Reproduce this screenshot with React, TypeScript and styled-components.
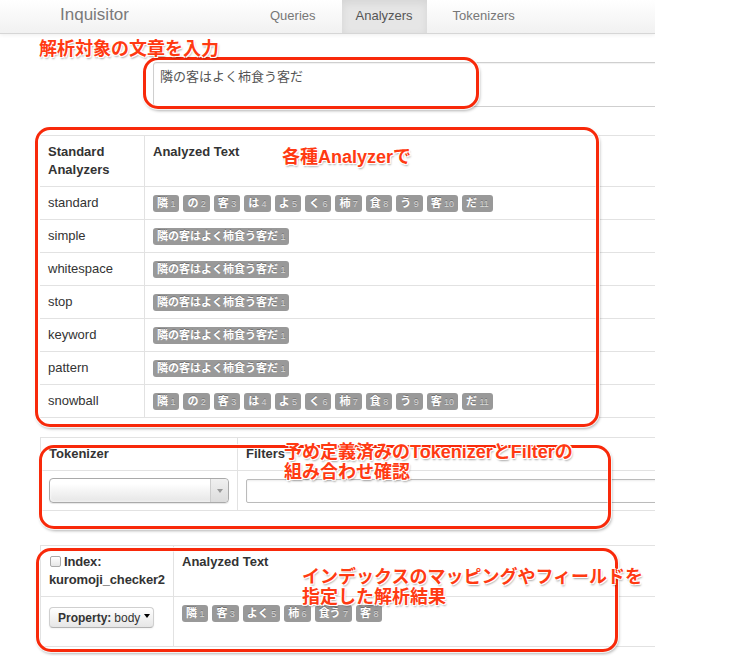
import React from "react";
import styled, { createGlobalStyle } from "styled-components";

const Global = createGlobalStyle`
  html, body { margin: 0; padding: 0; background: #fff; }
  body { font-family: "Liberation Sans", Arial, "Noto Sans CJK JP", sans-serif; color: #333; }
`;

const Viewport = styled.div`
  width: 736px;
  height: 656px;
  position: relative;
  overflow: hidden;
  background: #fff;
`;

const Page = styled.div`
  width: 655px;
  overflow: hidden;
`;

const Navbar = styled.div`
  height: 33px;
  display: flex;
  align-items: stretch;
  background: linear-gradient(#ffffff, #f1f1f1);
  border-bottom: 1px solid #d6d6d6;
  box-shadow: 0 1px 4px rgba(0, 0, 0, 0.07);
`;

const Brand = styled.div`
  width: 256px;
  flex: none;
  padding-left: 60px;
  box-sizing: border-box;
  display: flex;
  align-items: center;
  font-family: "Liberation Sans", Arial, sans-serif;
  font-size: 17px;
  color: #7a7a7a;
  padding-bottom: 3px;
`;

const Nav = styled.div`
  display: flex;
  gap: 12px;
`;

const NavItem = styled.div<{ $active?: boolean }>`
  display: flex;
  align-items: center;
  padding: 0 14px 2px;
  font-size: 13px;
  color: ${(p) => (p.$active ? "#555" : "#777")};
  background: ${(p) => (p.$active ? "#e6e6e6" : "transparent")};
  box-shadow: ${(p) => (p.$active ? "inset 0 3px 8px rgba(0,0,0,0.08)" : "none")};
`;

const Content = styled.div`
  padding-left: 40px;
`;

const InputSection = styled.div`
  height: 101px;
  padding-top: 28px;
  box-sizing: border-box;
  padding-left: 113px;
`;

const TextArea = styled.div`
  width: 560px;
  height: 45px;
  box-sizing: border-box;
  border: 1px solid #cfcfcf;
  border-radius: 3px;
  padding: 5px 6px;
  font-family: "Liberation Sans", "Noto Sans CJK JP", sans-serif;
  font-size: 13px;
  line-height: 18px;
  color: #555;
  box-shadow: inset 0 1px 1px rgba(0, 0, 0, 0.06);
`;

const Table = styled.table<{ $bordered?: boolean }>`
  width: 615px;
  border-collapse: collapse;
  font-size: 13px;
  line-height: 16px;
  color: #333;
  ${(p) => (p.$bordered ? "border-left: 1px solid #e2e2e2;" : "")}
  border-bottom: 1px solid #e2e2e2;
`;

const Th = styled.th<{ $w?: number; $tight?: boolean }>`
  text-align: left;
  vertical-align: top;
  font-weight: bold;
  padding: 7px 8px 7px;
  line-height: 18px;
  border-top: 1px solid #e2e2e2;
  white-space: nowrap;
  ${(p) => (p.$w ? `width: ${p.$w}px;` : "")}
  ${(p) => (p.$tight ? "letter-spacing: -0.15px;" : "")}
  & + & { border-left: 1px solid #e2e2e2; }
`;

const Td = styled.td<{ $h?: number; $top?: number }>`
  padding: ${(p) => (p.$top !== undefined ? `${p.$top}px 8px 0` : "0 8px")};
  height: ${(p) => (p.$h ?? 32) - (p.$top ?? 0)}px;
  vertical-align: ${(p) => (p.$top !== undefined ? "top" : "middle")};
  border-top: 1px solid #e2e2e2;
  & + & { border-left: 1px solid #e2e2e2; }
`;

const Labels = styled.div`
  display: flex;
  flex-wrap: wrap;
  gap: 4px;
`;

const Label = styled.span`
  display: inline-flex;
  align-items: baseline;
  background: #999;
  color: #fff;
  font-family: "Noto Sans CJK JP", sans-serif;
  font-weight: 700;
  font-size: 11px;
  line-height: 13px;
  padding: 1px 4px 1px 4px;
  border-radius: 3px;
  text-shadow: 0 -1px 0 rgba(0, 0, 0, 0.25);
`;

const Pos = styled.span`
  font-family: "Liberation Sans", Arial, sans-serif;
  font-weight: normal;
  font-size: 9px;
  color: rgba(255, 255, 255, 0.65);
  margin-left: 2.4px;
`;

const Gap = styled.div<{ $h: number }>`
  height: ${(p) => p.$h}px;
`;

const Select = styled.div`
  width: 180px;
  height: 25px;
  box-sizing: border-box;
  border: 1px solid #aaa;
  border-radius: 4px;
  background: linear-gradient(#ffffff 20%, #f2f2f2 60%, #e6e6e6);
  display: flex;
  justify-content: flex-end;
  box-shadow: 0 0 3px #fff inset, 0 1px 1px rgba(0,0,0,0.1);
`;

const SelectArrow = styled.div`
  width: 17px;
  border-left: 1px solid #ccc;
  border-radius: 0 4px 4px 0;
  background: linear-gradient(#f0f0f0, #dcdcdc);
  display: flex;
  align-items: center;
  justify-content: center;
  &::after {
    content: "";
    border-left: 3px solid transparent;
    border-right: 3px solid transparent;
    border-top: 4px solid #999;
  }
`;

const TextInput = styled.div`
  width: 430px;
  height: 24px;
  box-sizing: border-box;
  border: 1px solid #bbb;
  border-radius: 2px;
  box-shadow: inset 0 1px 2px rgba(0, 0, 0, 0.08);
`;

const Checkbox = styled.span`
  display: inline-block;
  width: 9px;
  height: 9px;
  border: 1px solid #aaa;
  border-radius: 2px;
  background: linear-gradient(#fff, #e6e6e6);
  margin: 0 3px 0 1px;
  vertical-align: -1px;
`;

const Button = styled.div`
  display: inline-flex;
  align-items: center;
  height: 21px;
  margin-top: 2px;
  padding: 0 8px;
  box-sizing: border-box;
  width: 105px;
  font-size: 12px;
  color: #333;
  border: 1px solid #cfcfcf;
  border-bottom-color: #b3b3b3;
  border-radius: 4px;
  background: linear-gradient(#ffffff, #e6e6e6);
  box-shadow: inset 0 1px 0 rgba(255,255,255,.2), 0 1px 2px rgba(0,0,0,.05);
  white-space: nowrap;
  & b { font-weight: 600; margin-right: 3px; }
  &::after {
    content: "";
    margin-left: 4px;
    margin-top: -4px;
    border-left: 3px solid transparent;
    border-right: 3px solid transparent;
    border-top: 4px solid #000;
  }
`;

const Note = styled.div<{ $x: number; $y: number }>`
  position: absolute;
  left: ${(p) => p.$x}px;
  top: ${(p) => p.$y}px;
  font-family: "Liberation Sans", Arial, "Noto Sans CJK JP", sans-serif;
  font-weight: 700;
  font-size: 18px;
  line-height: 20px;
  color: #ff3a12;
  white-space: nowrap;
  text-shadow: -1px -1px 0 #fff, 1px -1px 0 #fff, -1px 1px 0 #fff, 1px 1px 0 #fff,
    1px 2px 2px rgba(0, 0, 0, 0.35);
`;

const Ring = styled.div<{ $x: number; $y: number; $w: number; $h: number }>`
  position: absolute;
  left: ${(p) => p.$x}px;
  top: ${(p) => p.$y}px;
  width: ${(p) => p.$w}px;
  height: ${(p) => p.$h}px;
  box-sizing: border-box;
  border: 3px solid #f8290a;
  border-radius: 15px;
  box-shadow: 0 0 0 1px rgba(255, 255, 255, 0.8), 1px 2px 3px rgba(0, 0, 0, 0.3),
    inset 0 0 0 1px rgba(255, 255, 255, 0.5);
  pointer-events: none;
`;

type Tok = [string, number];
const split: Tok[] = [
  ["隣", 1], ["の", 2], ["客", 3], ["は", 4], ["よ", 5], ["く", 6],
  ["柿", 7], ["食", 8], ["う", 9], ["客", 10], ["だ", 11],
];
const whole: Tok[] = [["隣の客はよく柿食う客だ", 1]];
const kuromoji: Tok[] = [
  ["隣", 1], ["客", 3], ["よく", 5], ["柿", 6], ["食う", 7], ["客", 8],
];

const analyzers: [string, Tok[]][] = [
  ["standard", split],
  ["simple", whole],
  ["whitespace", whole],
  ["stop", whole],
  ["keyword", whole],
  ["pattern", whole],
  ["snowball", split],
];

const Tokens = ({ toks }: { toks: Tok[] }) => (
  <Labels>
    {toks.map(([t, n], i) => (
      <Label key={i}>
        {t}
        <Pos>{n}</Pos>
      </Label>
    ))}
  </Labels>
);

export default function App() {
  return (
    <Viewport>
      <Global />
      <Page>
        <Navbar>
          <Brand>Inquisitor</Brand>
          <Nav>
            <NavItem>Queries</NavItem>
            <NavItem $active>Analyzers</NavItem>
            <NavItem>Tokenizers</NavItem>
          </Nav>
        </Navbar>
        <Content>
          <InputSection>
            <TextArea>隣の客はよく柿食う客だ</TextArea>
          </InputSection>
          <Table>
            <thead>
              <tr>
                <Th $w={88}>
                  Standard
                  <br />
                  Analyzers
                </Th>
                <Th>Analyzed Text</Th>
              </tr>
            </thead>
            <tbody>
              {analyzers.map(([name, toks]) => (
                <tr key={name}>
                  <Td>{name}</Td>
                  <Td>
                    <Tokens toks={toks} />
                  </Td>
                </tr>
              ))}
            </tbody>
          </Table>
          <Gap $h={19} />
          <Table $bordered>
            <thead>
              <tr>
                <Th $w={178}>Tokenizer</Th>
                <Th>Filters</Th>
              </tr>
            </thead>
            <tbody>
              <tr>
                <Td $h={39}>
                  <Select>
                    <SelectArrow />
                  </Select>
                </Td>
                <Td $h={39}>
                  <TextInput />
                </Td>
              </tr>
            </tbody>
          </Table>
          <Gap $h={34} />
          <Table $bordered>
            <thead>
              <tr>
                <Th $w={116} $tight>
                  <Checkbox />
                  Index:
                  <br />
                  kuromoji_checker2
                </Th>
                <Th>Analyzed Text</Th>
              </tr>
            </thead>
            <tbody>
              <tr>
                <Td $h={49} $top={8}>
                  <Button>
                    <b>Property:</b>body
                  </Button>
                </Td>
                <Td $h={49} $top={8}>
                  <Tokens toks={kuromoji} />
                </Td>
              </tr>
            </tbody>
          </Table>
        </Content>
      </Page>

      <Ring $x={143} $y={57} $w={336} $h={52} />
      <Ring $x={35} $y={127} $w={564} $h={300} />
      <Ring $x={39} $y={445} $w={572} $h={84} />
      <Ring $x={36} $y={548} $w={582} $h={104} />

      <Note $x={39} $y={39}>解析対象の文章を入力</Note>
      <Note $x={282} $y={147}>各種Analyzerで</Note>
      <Note $x={284} $y={442}>
        予め定義済みのTokenizerとFilterの
        <br />
        組み合わせ確認
      </Note>
      <Note $x={302} $y={567}>
        インデックスのマッピングやフィールドを
        <br />
        指定した解析結果
      </Note>
    </Viewport>
  );
}
